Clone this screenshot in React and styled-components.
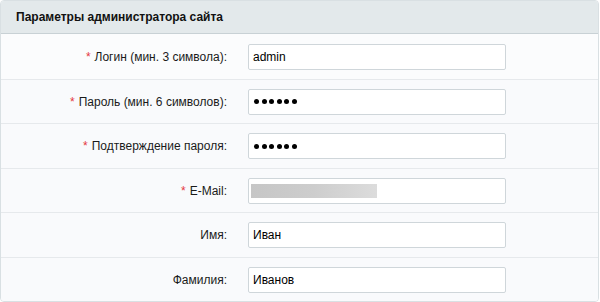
import React from "react";
import styled, { createGlobalStyle } from "styled-components";

const GlobalStyle = createGlobalStyle`
  body {
    margin: 0;
    background: #ffffff;
    font-family: "Liberation Sans", Arial, sans-serif;
  }
`;

const fields = [
  { label: "Логин (мин. 3 символа):", required: true, value: "admin" },
  { label: "Пароль (мин. 6 символов):", required: true, value: "123456", password: true },
  { label: "Подтверждение пароля:", required: true, value: "123456", password: true },
  { label: "E-Mail:", required: true, hidden: true },
  { label: "Имя:", value: "Иван" },
  { label: "Фамилия:", value: "Иванов" },
];

export default function App() {
  return (
    <>
      <GlobalStyle />
      <Panel>
        <Header>Параметры администратора сайта</Header>
        {fields.map((f, i) => (
          <Row key={f.label} first={i === 0} tall={i % 2 === 0}>
            <Label>
              {f.required && <Star>*</Star>}
              {f.label}
            </Label>
            <Field>
              {f.hidden ? (
                <Blur />
              ) : f.password ? (
                <Dots>
                  {Array.from({ length: f.value.length }).map((_, j) => (
                    <Dot key={j} />
                  ))}
                </Dots>
              ) : (
                f.value
              )}
            </Field>
          </Row>
        ))}
      </Panel>
    </>
  );
}

const Panel = styled.div`
  width: 597px;
  border: 1px solid #d9e0e3;
  border-radius: 4px;
  overflow: hidden;
  background: #f9fafc;
`;

const Header = styled.div`
  height: 32px;
  display: flex;
  align-items: center;
  padding-left: 15px;
  background: #e3e9eb;
  border-bottom: 1px solid #c8d1d5;
  font-size: 12px;
  font-weight: bold;
  color: #111;
`;

const Row = styled.div.withConfig({
  shouldForwardProp: (p) => p !== "first" && p !== "tall",
})`
  display: grid;
  grid-template-columns: 226px 1fr;
  column-gap: 21px;
  align-items: center;
  height: ${(p) => (p.first ? 45 : p.tall ? 44 : 43)}px;
  border-top: ${(p) => (p.first ? "none" : "1px solid #e6e9ec")};
  background: ${(p) => (p.first ? "#fbfcfd" : "#f9fafc")};
`;

const Label = styled.div`
  text-align: right;
  font-size: 12px;
  color: #1a1a1a;
  white-space: nowrap;
`;

const Star = styled.span`
  color: #e5373d;
  margin-right: 4px;
`;

const Field = styled.div`
  box-sizing: border-box;
  width: 258px;
  height: 26px;
  display: flex;
  align-items: center;
  padding: 0 4px;
  background: #ffffff;
  border: 1px solid #cfd6da;
  border-radius: 2px;
  font-size: 12px;
  color: #000;
`;

const Dots = styled.div`
  display: flex;
  gap: 2.5px;
  padding-left: 1px;
`;

const Dot = styled.span`
  width: 5px;
  height: 5px;
  border-radius: 50%;
  background: #000;
`;

const Blur = styled.span`
  width: 126px;
  height: 14px;
  margin-left: -2px;
  background: linear-gradient(90deg, #c6c6c6 0%, #cdcdcd 50%, #dcdcdc 100%);
`;
